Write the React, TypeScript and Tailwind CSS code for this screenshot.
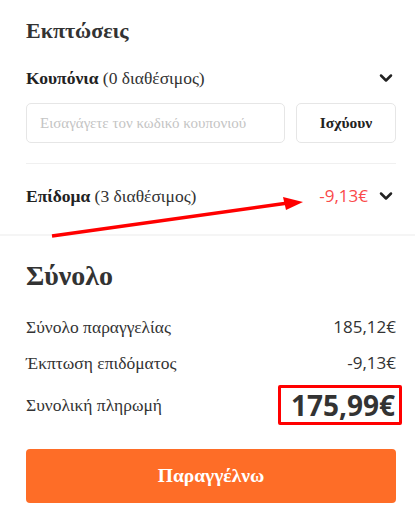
import { ChevronDown } from 'lucide-react'

const serif = { fontFamily: '"Liberation Serif", "Times New Roman", serif' }
const sans = { fontFamily: '"Open Sans", "Noto Sans", sans-serif' }

function SummaryRow({ label, value }: { label: string; value: string }) {
  return (
    <div className="flex h-[36px] items-center justify-between">
      <span className="text-[17.5px] text-[#333]" style={serif}>{label}</span>
      <span className="text-[17px] text-[#333]" style={sans}>{value}</span>
    </div>
  )
}

export default function App() {
  return (
    <div className="relative h-[514px] w-[415px] overflow-hidden bg-white text-[#222]">
      {/* Discounts */}
      <div className="pl-[26px] pr-[19px]">
        <h2 className="mt-[15px] h-[32px] text-[22px] font-bold leading-[32px] text-[#333]" style={serif}>
          Εκπτώσεις
        </h2>

        <div className="mt-[15px] flex h-[32px] items-center justify-between">
          <span className="text-[17.5px] text-[#333]" style={serif}>
            <b className="text-[#222]">Κουπόνια</b> (0 διαθέσιμος)
          </span>
          <ChevronDown className="h-[20px] w-[20px] text-[#222]" strokeWidth={3} />
        </div>

        <div className="mt-[9px] flex h-[40px] gap-[11px]">
          <input
            className="h-full w-[259px] rounded-[5px] border border-[#e6e6e6] px-[13px] text-[15px] text-[#333] outline-none placeholder:text-[#c4c4c4]"
            style={serif}
            placeholder="Εισαγάγετε τον κωδικό κουπονιού"
          />
          <button
            className="h-full flex-1 rounded-[5px] border border-[#e6e6e6] bg-white text-[15.5px] font-bold text-[#222]"
            style={serif}
          >
            Ισχύουν
          </button>
        </div>

        <div className="mt-[20px] h-px bg-[#f0f0f0]" />

        <div className="flex h-[64px] items-center justify-between">
          <span className="text-[17.5px] text-[#333]" style={serif}>
            <b className="text-[#222]">Επίδομα</b> (3 διαθέσιμος)
          </span>
          <div className="flex items-center gap-[8px]">
            <span className="text-[17px] text-[#fa4a4a]" style={sans}>-9,13€</span>
            <ChevronDown className="h-[20px] w-[20px] text-[#222]" strokeWidth={3} />
          </div>
        </div>
      </div>

      <div className="mt-[6px] h-[2px] bg-[#f5f5f5]" />

      {/* Total */}
      <div className="pl-[26px] pr-[19px]">
        <h2 className="mt-[22px] h-[36px] text-[28px] font-bold leading-[36px] text-[#333]" style={serif}>
          Σύνολο
        </h2>

        <div className="mt-[15px]">
          <SummaryRow label="Σύνολο παραγγελίας" value="185,12€" />
          <SummaryRow label="Έκπτωση επιδόματος" value="-9,13€" />
        </div>

        <div className="mt-[4px] flex h-[40px] items-center justify-between">
          <span className="text-[17.5px] text-[#333]" style={serif}>Συνολική πληρωμή</span>
          <span
            className="-mr-[6px] flex h-[40px] items-center rounded-[2px] border-[3px] border-[#ff0000] pl-[10px] pr-[4px] text-[28px] font-bold text-[#333]"
            style={sans}
          >
            175,99€
          </span>
        </div>

        <button
          className="mt-[24px] h-[54px] w-full rounded-[4px] bg-[#fe6d27] text-[19.5px] font-bold text-white"
          style={serif}
        >
          Παραγγέλνω
        </button>
      </div>

      {/* annotation arrow */}
      <svg className="pointer-events-none absolute left-0 top-0" width="415" height="514">
        <line x1="52" y1="236" x2="288" y2="203" stroke="#ff0000" strokeWidth="3.5" />
        <polygon points="283,197 303,202 286,210" fill="#ff0000" />
      </svg>
    </div>
  )
}
